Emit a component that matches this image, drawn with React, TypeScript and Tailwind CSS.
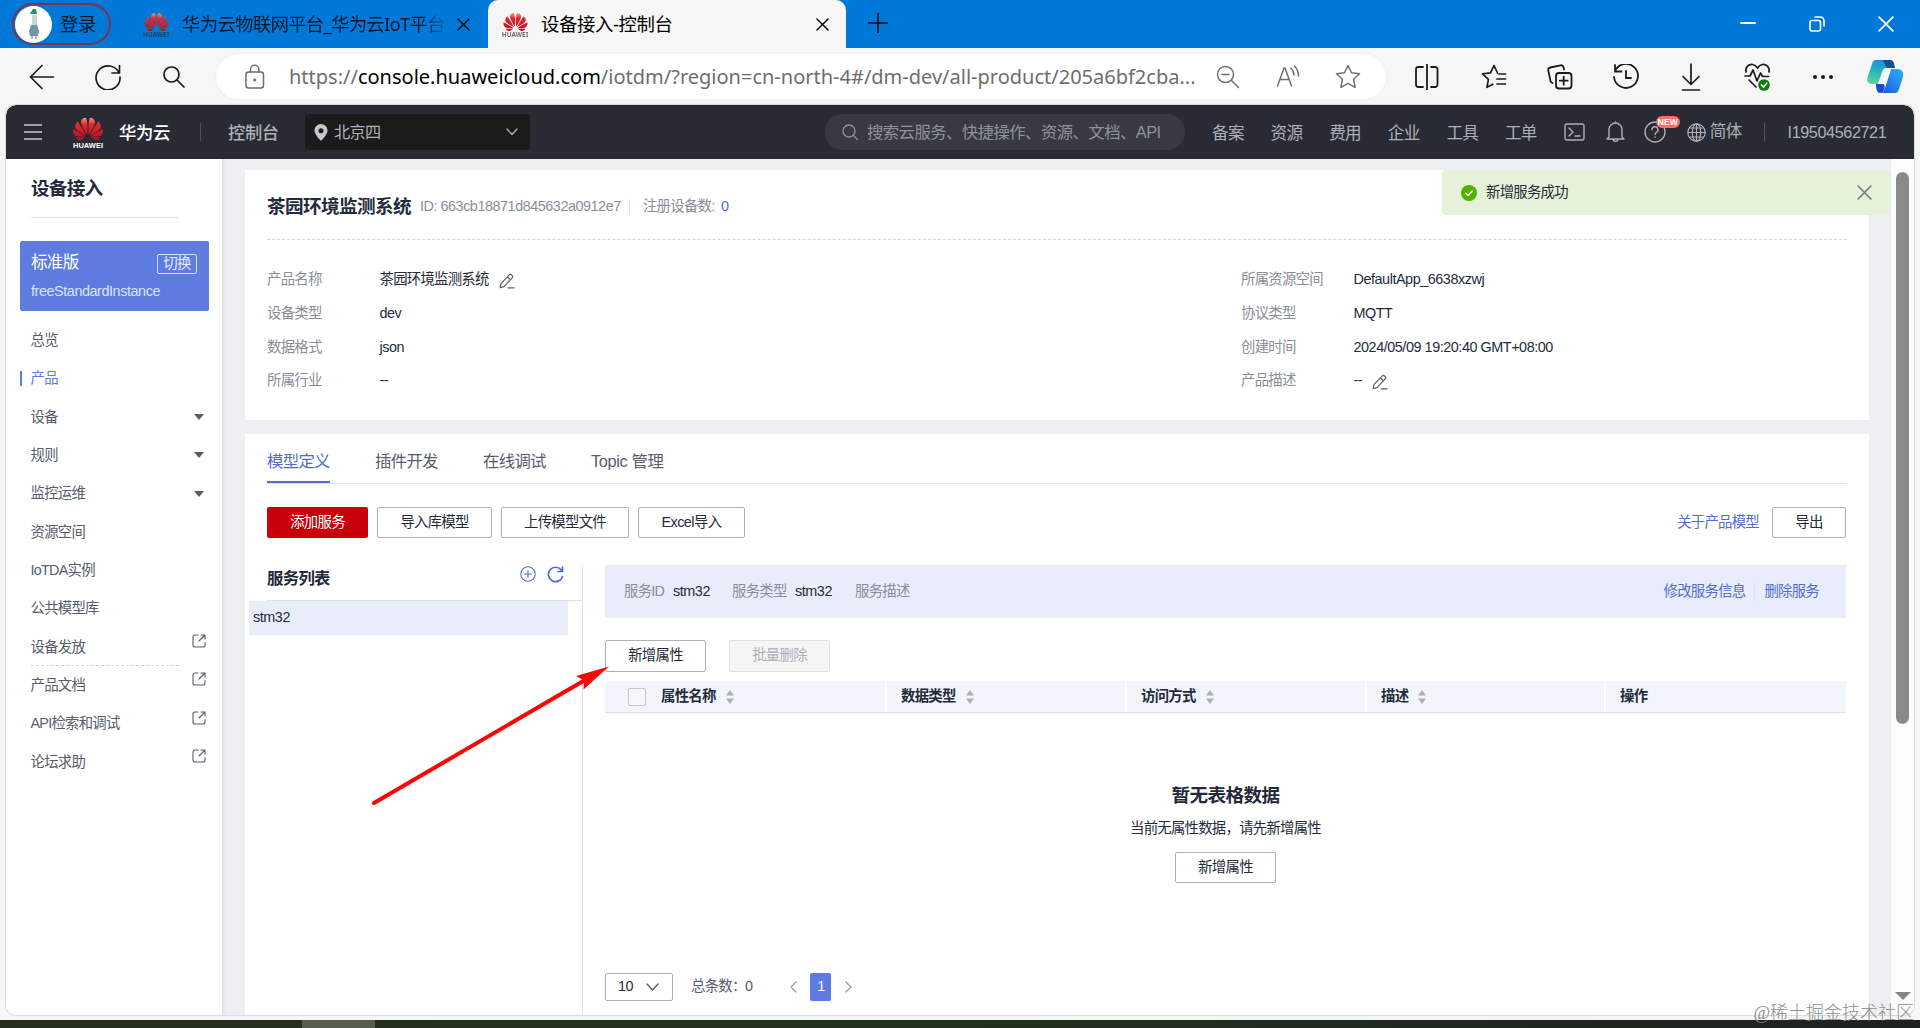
import React from "react";
import { SiHuawei } from "react-icons/si";

type IconProps = {
  w: number;
  h?: number;
  vb?: string;
  sw?: number;
  className?: string;
  children: React.ReactNode;
};

function Icon({ w, h = w, vb, sw = 1.5, className = "", children }: IconProps) {
  return (
    <svg
      width={w}
      height={h}
      viewBox={vb ?? `0 0 ${w} ${h}`}
      fill="none"
      stroke="currentColor"
      strokeWidth={sw}
      strokeLinecap="round"
      strokeLinejoin="round"
      className={`shrink-0 ${className}`}
    >
      {children}
    </svg>
  );
}

const Cross = ({ s, sw = 1.5, className = "" }: { s: number; sw?: number; className?: string }) => (
  <Icon w={s} vb="0 0 14 14" sw={sw} className={className}>
    <path d="M1 1l12 12M13 1L1 13" />
  </Icon>
);

const Edit = ({ className = "" }: { className?: string }) => (
  <Icon w={16} sw={1.2} className={`text-[#575d6c] ${className}`}>
    <path d="M1.2 14.6l.7-4L10.3 1.9a1.5 1.5 0 0 1 2.1 0l.8.8a1.5 1.5 0 0 1 0 2.1L5 13.6zM8.6 4l2.7 2.7M9 14.8h6" />
  </Icon>
);

const External = () => (
  <Icon w={14} sw={1.1} className="text-[#575d6c]">
    <path d="M6 1H3a2 2 0 0 0-2 2v8a2 2 0 0 0 2 2h8a2 2 0 0 0 2-2V8.500M9 1h4v4M13 1L7 7" />
  </Icon>
);

const Sort = () => (
  <svg width="8" height="14" viewBox="0 0 8 14" className="ml-[10px] shrink-0 fill-[#adb0b8]">
    <path d="M4 0l4 5.500H0zM4 14L0 8.500h8z" />
  </svg>
);

/* Latin text is set a little looser than the Chinese text round it. */
const isLatin = (s: string) => /^[\x00-\x7f]*$/.test(s);
const tracking = (s: string) => (isLatin(s) ? "tracking-[-0.45px]" : "");

function Logo({ caption, small }: { caption: string; small?: boolean }) {
  return (
    <span className={small ? "flex w-[26px] shrink-0 flex-col items-center tracking-normal" : "flex w-[32px] shrink-0 flex-col items-center tracking-normal"}>
      <SiHuawei className={small ? "h-[24px] w-[25px] fill-[url(#petal)]" : "h-[30px] w-[30px] fill-[url(#petal)]"} />
      <span
        className={
          small
            ? "-mt-[3px] text-[6.5px] leading-[7px] font-bold text-[#333] opacity-70"
            : "-mt-[3px] text-[7.500px] leading-[9px] font-bold text-white"
        }
      >
        {caption}
      </span>
    </span>
  );
}

function TabBar() {
  return (
    <div className="flex h-[48px] items-stretch bg-[#0078d8] font-['Noto_Sans','Noto_Sans_CJK_SC',sans-serif] text-[18.400px] tracking-[-0.4px] text-[#0b1626]">
      <div className="mt-[3px] ml-[12px] flex h-[42px] w-[99px] items-center rounded-full border-2 border-[#7d3350] pl-px">
        <span className="flex h-[37px] w-[37px] items-center justify-center rounded-full bg-white">
          <svg width="12" height="32" viewBox="0 0 12 32">
            <path d="M3 4l2-3h3l1 5H2z" fill="#2f8a6c" />
            <path d="M4 7h5v11H4z" fill="#c4d8d5" />
            <path d="M3 17h6l2 6-1 5H2l-1-5z" fill="#6e97a8" />
            <path d="M3 28h2v3H3zM7 28h2v3H7z" fill="#b8b4c4" />
          </svg>
        </span>
        <span className="ml-[8px]">登录</span>
      </div>
      <div className="ml-[32px] flex w-[345px] items-center">
        <Logo caption="HUAWEI" small />
        <span className="ml-[13px] w-[264px] whitespace-nowrap [mask-image:linear-gradient(to_right,black_90%,#0002)] tracking-[-0.7px]">
          华为云物联网平台_华为云IoT平台
        </span>
        <Cross s={13} className="ml-[11px] text-black" />
      </div>
      <div className="flex w-[358px] items-center rounded-t-[10px] bg-[#f6f6f6]">
        <span className="ml-[14px]"><Logo caption="HUAWEI" small /></span>
        <span className="ml-[13px] w-[275px] text-black">设备接入-控制台</span>
        <Cross s={13} className="text-black" />
      </div>
      <Icon w={20} sw={1.4} className="mt-[13px] ml-[22px] text-black">
        <path d="M10 0v20M0 10h20" />
      </Icon>
      <div className="ml-auto flex items-center gap-[53px] pr-[26px] text-white">
        <Icon w={16} sw={1.8}><path d="M1 7h14" /></Icon>
        <Icon w={16} sw={1.6}>
          <rect x="1" y="4.500" width="10.500" height="10.500" rx="2" />
          <path d="M6 1h5a4 4 0 0 1 4 4v5" />
        </Icon>
        <Cross s={16} sw={1.5} />
      </div>
    </div>
  );
}

function AddressBar() {
  return (
    <div className="flex h-[57px] items-center bg-[#f6f6f6] text-[#1b1b1b]">
      <Icon w={26} sw={1.7} className="ml-[29px]"><path d="M24.500 13H1.500M13 1.500L1.500 13 13 24.500" /></Icon>
      <Icon w={26} sw={1.7} className="ml-[40px]">
        <path d="M24 9A12 12 0 1 0 25 13M24.500 1.500V9H17" />
      </Icon>
      <Icon w={24} sw={1.7} className="ml-[41px]"><circle cx="9.500" cy="9.500" r="7.500" /><path d="M15 15l7 7" /></Icon>
      <div className="ml-[30px] flex h-[45px] w-[1170px] items-center rounded-full bg-white text-[#6e6e6e] shadow-[0_0_3px_#0000000f]">
        <Icon w={20} h={26} sw={1.5} className="ml-[29px]">
          <rect x="1" y="8" width="17.500" height="16" rx="2.500" />
          <path d="M5.500 8V5.500a4.200 4.200 0 0 1 8.400 0V8" />
          <circle cx="9.700" cy="16" r=".8" fill="currentColor" />
        </Icon>
        <span className="ml-[24px] w-[909px] whitespace-nowrap font-['Noto_Sans'] text-[20px] tracking-normal">
          https://<span className="text-black">console.huaweicloud.com</span>/iotdm/?region=cn-north-4#/dm-dev/all-product/205a6bf2cba...
        </span>
        <Icon w={24} sw={1.5} className="ml-[18px]">
          <circle cx="9.500" cy="9.500" r="8" /><path d="M15.500 15.500l7 7M6 9.500h7" />
        </Icon>
        <Icon w={26} sw={1.5} className="ml-[36px]">
          <path d="M1.500 22L8 4h1l6.500 18M4 15.500h9M15 4a10 10 0 0 1 3 7M18.500 2a14 14 0 0 1 4 10" />
        </Icon>
        <Icon w={26} sw={1.5} className="ml-[33px]">
          <path d="M13 1.500l3.500 7.300 8 1-5.900 5.500 1.500 8-7.100-3.900-7.100 3.900 1.500-8L1.500 9.800l8-1z" />
        </Icon>
      </div>
      <Icon w={26} sw={1.8} className="ml-[28px]">
        <path d="M9 3H4.500a2.500 2.500 0 0 0-2.500 2.500v15A2.500 2.500 0 0 0 4.500 23H9M17 3h4a2.500 2.500 0 0 1 2.500 2.500v15A2.500 2.500 0 0 1 21 23h-4M13 0v26" />
      </Icon>
      <Icon w={26} sw={1.7} className="ml-[41px]">
        <path d="M16.500 9L13 1.500 9.500 8.800l-8 1 5.900 5.500-1.500 8 6-3M18 10h6.500M16 15h8.500M16 20h8.500" />
      </Icon>
      <Icon w={26} sw={1.8} className="ml-[40px]">
        <rect x="9" y="9" width="15.500" height="15.500" rx="3" />
        <path d="M16.700 12.700v8M12.700 16.700h8M5.500 19c-1.200-.300-1.700-1-2-2L1.300 6.500c-.300-1.600.500-2.700 2-3L13.500 1.300c1.500-.300 2.700.700 3 2L17 5.500" />
      </Icon>
      <Icon w={26} sw={1.8} className="ml-[40px]">
        <path d="M2 7A12 12 0 1 1 1 13M2 1v6.500h6.500M13 7v7h5" />
      </Icon>
      <Icon w={24} h={28} sw={1.7} className="ml-[41px]">
        <path d="M11 1v20M3 13.500l8 8 8-8M2.500 27h17" />
      </Icon>
      <Icon w={28} sw={1.7} className="ml-[40px]">
        <path d="M2 9C1 4 5 1 8.500 1.500c2.500.400 4 2 5 3.500 1-1.500 2.500-3.100 5-3.500C22 1 26 4 25 9M1 13h5l3-6 4 11 3.500-8 2 3.500h6M5 17l7 7" />
        <circle cx="20" cy="22" r="5" fill="#107c10" stroke="#107c10" />
        <path d="M17.500 22l2 2 3.200-3.800" stroke="white" />
      </Icon>
      <Icon w={22} h={6} className="ml-[40px]">
        <g fill="currentColor" stroke="none"><circle cx="3" cy="3" r="2" /><circle cx="11" cy="3" r="2" /><circle cx="19" cy="3" r="2" /></g>
      </Icon>
      <svg width="37" height="33" viewBox="0 0 37 33" className="ml-[33px] shrink-0">
        <defs>
          <linearGradient id="cpA" x1="0.500" y1="0" x2="0.300" y2="1">
            <stop offset="0" stopColor="#168fd8" /><stop offset=".5" stopColor="#2ab5bd" /><stop offset="1" stopColor="#5fd692" />
          </linearGradient>
          <linearGradient id="cpB" x1="1" y1="0" x2="0" y2="1">
            <stop offset="0" stopColor="#2fb4fa" /><stop offset="1" stopColor="#1a55e0" />
          </linearGradient>
        </defs>
        <path d="M9 0h13c3 0 4 2 5 8h-8c-2 0-3 1-4 4l-4 12H5c-4 0-6-3-4-8L5 4c1-3 2-4 4-4z" fill="url(#cpA)" />
        <path d="M16 0h7c3 0 4 2 5 8h-7c-2 0-3-4-5-8z" fill="#14508c" />
        <path d="M28 33H13c3 0 4-2 5-5l6-19h6c5 0 7 3 6 8l-4 12c-1 3-2 4-4 4z" fill="url(#cpB)" />
        <path d="M9 24h7c2 0 2 4 1 6-1 2-2 3-4 3-3 0-4-4-4-9z" fill="#1f49c9" />
        <path d="M20 9h4l-5 15h-8c2 0 3-1 4-4l2-7c1-3 1-4 3-4z" fill="#f4fbff" />
      </svg>
    </div>
  );
}

function ConsoleHeader() {
  const links = ["备案", "资源", "费用", "企业", "工具", "工单"];
  return (
    <header className="flex h-[54px] shrink-0 items-center rounded-t-[10px] bg-[#282b33] text-[16.600px] leading-[20px] tracking-[-0.7px] whitespace-nowrap text-[#adb0b8]">
      <Icon w={18} sw={1.7} className="ml-[18px] text-[#c5c7cc]"><path d="M0 2h18M0 9h18M0 16h18" /></Icon>
      <span className="ml-[30px]"><Logo caption="HUAWEI" /></span>
      <span className="ml-[15px] w-[51px] pt-px text-[17.400px] tracking-[-0.4px] font-medium text-white">华为云</span>
      <span className="ml-[30px] h-[18px] w-px bg-[#50535b]" />
      <span className="ml-[27px] w-[51px] pt-px text-[17.300px] tracking-[-0.400px] font-medium">控制台</span>
      <div className="ml-[26px] flex h-[36px] w-[225px] items-center rounded-[3px] bg-[#1b1b1c]">
        <svg width="14" height="17" viewBox="0 0 14 17" className="ml-[9px] fill-[#c5c7cc]">
          <path fillRule="evenodd" d="M7 0a6.600 6.600 0 0 1 6.600 6.600C13.600 10.500 7 17 7 17S.4 10.500.4 6.600A6.600 6.600 0 0 1 7 0zm0 4.200a2.500 2.500 0 1 0 0 5 2.500 2.500 0 0 0 0-5z" />
        </svg>
        <span className="ml-[6px] text-[16.200px]">北京四</span>
        <Icon w={12} h={8} sw={1.3} className="mr-[12px] ml-auto"><path d="M1 1l5 5.500L11 1" /></Icon>
      </div>
      <div className="ml-[295px] flex h-[36px] w-[360px] items-center rounded-full bg-[#393a41] text-[16.400px] tracking-[-0.58px] text-[#8f929a]">
        <Icon w={17} sw={1.3} className="ml-[17px]"><circle cx="7" cy="7" r="6" /><path d="M11.500 11.500l4 4" /></Icon>
        <span className="ml-[8px]">搜索云服务、快捷操作、资源、文档、API</span>
      </div>
      <nav className="mt-[3px] ml-[27px] flex gap-[26.800px]">
        {links.map((l) => <span key={l} className="w-[31.800px]">{l}</span>)}
      </nav>
      <Icon w={21} h={18} sw={1.4} className="ml-[27px]">
        <rect x="1" y="1" width="19" height="16" rx="2" /><path d="M5 5l4 4-4 4M11 13h5" />
      </Icon>
      <Icon w={19} h={22} sw={1.4} className="ml-[21px]">
        <path d="M3 16V8.500a6.500 6.500 0 0 1 13 0V16l2 2H1zM7 18.500a2.600 2.600 0 0 0 5 0M9.500 2V1" />
      </Icon>
      <span className="relative ml-[19px]">
        <Icon w={22} sw={1.4}>
          <circle cx="11" cy="11" r="10" />
          <path d="M8 8.800a3 3 0 1 1 4.500 2.500c-1 .600-1.500 1.200-1.500 2.200M11 16v.300" />
        </Icon>
        <span className="absolute -top-[5px] left-[12px] flex h-[12px] w-[24px] items-center justify-center rounded-full bg-[#f66f6a] text-[8.500px] leading-[12px] font-bold tracking-normal text-white">
          NEW
        </span>
      </span>
      <Icon w={19} sw={1.2} className="ml-[21px]">
        <circle cx="9.500" cy="9.500" r="8.700" />
        <ellipse cx="9.500" cy="9.500" rx="4.200" ry="8.700" />
        <path d="M9.500 1v17M1 9.500h17M2.500 5h14M2.500 14h14" />
      </Icon>
      <span className="ml-[4px]">简体</span>
      <span className="ml-[22px] h-[18px] w-px bg-[#50535b]" />
      <span className="ml-[23px] text-[16.200px] tracking-[-0.400px]">I19504562721</span>
    </header>
  );
}

const menu: { label: string; kind?: "active" | "group" | "link"; dashed?: boolean }[] = [
  { label: "总览" },
  { label: "产品", kind: "active" },
  { label: "设备", kind: "group" },
  { label: "规则", kind: "group" },
  { label: "监控运维", kind: "group" },
  { label: "资源空间" },
  { label: "IoTDA实例" },
  { label: "公共模型库" },
  { label: "设备发放", kind: "link", dashed: true },
  { label: "产品文档", kind: "link" },
  { label: "API检索和调试", kind: "link" },
  { label: "论坛求助", kind: "link" },
];

function Sidebar() {
  return (
    <aside className="flex w-[216px] shrink-0 flex-col bg-white text-[#575d6c] shadow-[1px_0_3px_#0000001a]">
      <h1 className="mt-[15px] ml-[25px] h-[44px] w-[148px] border-b border-[#dfe1e6] text-[18.600px] leading-[29px] font-bold text-[#252b3a]">
        设备接入
      </h1>
      <div className="mt-[23px] ml-[14px] h-[70px] w-[189px] rounded-[2px] bg-[#5e7ce0] px-[11px] text-white">
        <div className="flex h-[45px] items-center justify-between">
          <span className="text-[16.600px]">标准版</span>
          <span className="mr-px flex h-[20px] w-[40px] items-center justify-center rounded-[2px] border border-[#d5ddf8] text-[14.500px] text-[#e4eafc]">切换</span>
        </div>
        <div className="-mt-[5px] text-[14.400px] leading-[20px] tracking-[-0.430px] text-[#dbe3fb]">freeStandardInstance</div>
      </div>
      <ul className="mt-[10px]">
        {menu.map((m) => (
          <li
            key={m.label}
            className={`flex h-[38.350px] items-center ${m.kind === "link" ? "pr-[16.500px]" : "pr-[18px]"} ${m.kind === "active" ? "pl-[14px] text-[#5e7ce0]" : "pl-[24.500px]"}`}
          >
            {m.kind === "active" && <span className="mr-[8.500px] h-[15px] w-[2px] bg-[#5e7ce0]" />}
            <span className="relative pt-px">
              {m.label}
              {m.dashed && <i className="absolute top-[29px] left-0 w-[148px] border-t border-dashed border-[#d0d2d8]" />}
            </span>
            {m.kind === "group" && (
              <i className="ml-auto border-x-[5px] border-t-[6px] border-x-transparent border-t-[#575d6c]" />
            )}
            {m.kind === "link" && <span className="mb-[12px] ml-auto"><External /></span>}
          </li>
        ))}
      </ul>
    </aside>
  );
}

function Field({ label, value, edit }: { label: string; value: string; edit?: boolean }) {
  return (
    <div className="flex h-[33.800px] items-center">
      <span className="w-[112.500px] text-[#8a8e99]">{label}</span>
      <span className={`text-[#252b3a] ${tracking(value)}`}>{value}</span>
      {edit && <Edit className="mt-[2px] ml-[10px]" />}
    </div>
  );
}

function ProductCard() {
  return (
    <section className="h-[250px] shrink-0 bg-white px-[22px]">
      <div className="flex h-[70px] items-center border-b border-dashed border-[#d4d6db] pt-[4px]">
        <h2 className="text-[18.600px] tracking-[-0.6px] font-bold text-[#252b3a]">茶园环境监测系统</h2>
        <span className="ml-[9px] w-[201px] tracking-[-0.460px] whitespace-nowrap text-[#8a8e99]">ID: 663cb18871d845632a0912e7</span>
        <span className="ml-[8px] h-[15px] w-px bg-[#dfe1e6]" />
        <span className="ml-[13px] text-[#8a8e99]">注册设备数:&nbsp; <b className="font-normal text-[#526ecc]">0</b></span>
      </div>
      <div className="flex pt-[23px]">
        <div className="w-[974px]">
          <Field label="产品名称" value="茶园环境监测系统" edit />
          <Field label="设备类型" value="dev" />
          <Field label="数据格式" value="json" />
          <Field label="所属行业" value="--" />
        </div>
        <div>
          <Field label="所属资源空间" value="DefaultApp_6638xzwj" />
          <Field label="协议类型" value="MQTT" />
          <Field label="创建时间" value="2024/05/09 19:20:40 GMT+08:00" />
          <Field label="产品描述" value="--" edit />
        </div>
      </div>
    </section>
  );
}

const btn = "flex shrink-0 items-center justify-center rounded-[2px] border border-[#adb0b8] text-[#252b3a]";

function ServiceList() {
  return (
    <div className="flex w-[338px] shrink-0 flex-col border-r border-[#dfe1e6] pl-[4px]">
      <div className="ml-[18px] flex h-[36px] items-center border-b border-[#dfe1e6] pb-[17px] text-[#526ecc]">
        <h3 className="mt-[7px] text-[16.400px] leading-[20px] tracking-[-0.7px] font-bold text-[#252b3a]">服务列表</h3>
        <Icon w={16} sw={1.100} className="mr-[11px] ml-auto"><circle cx="8" cy="8" r="7.200" /><path d="M8 4.500v7M4.500 8h7" /></Icon>
        <Icon w={17} sw={1.700} className="mr-[18px]"><path d="M14.500 4.300A7.200 7.200 0 1 0 15.500 10.500M15.500 1v4.500H11" /></Icon>
      </div>
      <div className="flex h-[34px] w-[319px] items-center bg-[#e9edfa] pl-[4px] tracking-[-0.450px] text-[#252b3a]">stm32</div>
    </div>
  );
}

function ServiceDetail() {
  const cols = [
    { t: "数据类型", s: true, c: "w-[240px]" },
    { t: "访问方式", s: true, c: "w-[240px]" },
    { t: "描述", s: true, c: "w-[239px]" },
    { t: "操作", s: false, c: "flex-1" },
  ];
  return (
    <div className="ml-[22px] flex w-[1241px] flex-col">
      <div className="flex h-[53px] items-center bg-[#e9edfa] px-[19px] text-[#8a8e99]">
        <span className="w-[49px]">服务ID</span>
        <span className="w-[59px] tracking-[-0.450px] text-[#252b3a]">stm32</span>
        <span className="w-[63px]">服务类型</span>
        <span className="w-[60px] tracking-[-0.450px] text-[#252b3a]">stm32</span>
        <span>服务描述</span>
        <span className="mr-[9px] ml-auto text-[#526ecc]">修改服务信息</span>
        <span className="h-[20px] w-px bg-[#dfe1e6]" />
        <span className="mr-[8px] ml-[9px] text-[#526ecc]">删除服务</span>
      </div>
      <div className="mt-[22px] flex h-[32px] gap-[23px]">
        <span className={`${btn} w-[101px]`}>新增属性</span>
        <span className="flex w-[101px] items-center justify-center rounded-[2px] border border-[#dfe1e6] bg-[#f5f5f6] text-[#adb0b8]">批量删除</span>
      </div>
      <div className="mt-[9px] flex h-[32px] border-b border-[#dfe1e6] bg-[#f2f5fc] font-bold text-[#252b3a]">
        <div className="flex w-[282px] items-center border-r-2 border-white pt-px pl-[23px]">
          <span className="mr-[15px] h-[18px] w-[18px] rounded-[2px] border border-[#c3c6cd] bg-[#f5f7fd]" />
          属性名称<Sort />
        </div>
        {cols.map((c) => (
          <div key={c.t} className={`${c.c} flex items-center pt-px pl-[14px] ${c.s ? "border-r-2 border-white" : ""}`}>
            {c.t}{c.s && <Sort />}
          </div>
        ))}
      </div>
      <div className="flex h-[260px] flex-col items-center pt-[70px]">
        <h3 className="text-[18.600px] leading-[26px] tracking-[-0.6px] font-bold text-[#252b3a]">暂无表格数据</h3>
        <p className="mt-[9px] leading-[20px] text-[#252b3a]">当前无属性数据，请先新增属性</p>
        <span className={`${btn} mt-[14px] h-[31px] w-[101px]`}>新增属性</span>
      </div>
      <div className="flex h-[28px] items-center text-[#575d6c]">
        <span className="flex h-[28px] w-[68px] items-center rounded-[2px] border border-[#adb0b8] pl-[12px] tracking-[-0.450px] text-[#252b3a]">
          10
          <Icon w={13} h={9} sw={1.400} className="ml-[13px] text-[#575d6c]"><path d="M1 1l5.500 6L12 1" /></Icon>
        </span>
        <span className="ml-[18px] w-[54px] whitespace-nowrap">总条数：</span>0
        <Icon w={7} h={12} sw={1.300} className="ml-[38px] text-[#9a9da6]"><path d="M6 1L1 6l5 5" /></Icon>
        <span className="ml-[13px] flex h-[28px] w-[21px] items-center justify-center rounded-[2px] bg-[#5e7ce0] text-white">1</span>
        <Icon w={7} h={12} sw={1.300} className="ml-[14px] text-[#9a9da6]"><path d="M1 1l5 5-5 5" /></Icon>
      </div>
    </div>
  );
}

function ModelCard() {
  return (
    <section className="mt-[14px] flex flex-1 flex-col bg-white">
      <div className="mr-[23px] ml-[22px] flex h-[50px] border-b border-[#dfe1e6] text-[16.400px] leading-[55px] tracking-[-0.7px] text-[#575d6c]">
        <span className="h-[49px] w-[63px] border-b-2 border-[#526ecc] text-[#526ecc]">模型定义</span>
        <span className="ml-[45px] w-[63px]">插件开发</span>
        <span className="ml-[45px] w-[63px]">在线调试</span>
        <span className="ml-[45px] tracking-[-0.4px]">Topic 管理</span>
      </div>
      <div className="mr-[23px] ml-[22px] mt-[23px] flex h-[31px] gap-[9px]">
        <span className="flex w-[101px] items-center justify-center rounded-[2px] bg-[#c7000b] text-white">添加服务</span>
        <span className={`${btn} w-[115px]`}>导入库模型</span>
        <span className={`${btn} w-[128px]`}>上传模型文件</span>
        <span className={`${btn} w-[107px] tracking-[-0.550px]`}>Excel导入</span>
        <span className="mr-[4px] ml-auto self-center text-[#526ecc]">关于产品模型</span>
        <span className={`${btn} w-[74px]`}>导出</span>
      </div>
      <div className="mt-[27px] flex flex-1">
        <ServiceList />
        <ServiceDetail />
      </div>
    </section>
  );
}

function Toast() {
  return (
    <div className="absolute top-[170px] left-[1442px] flex h-[45px] w-[449px] items-center rounded-[4px] bg-[#e6f1d9] text-[#252b3a]">
      <Icon w={16} sw={1.400} className="ml-[19px]">
        <circle cx="8" cy="8" r="8" fill="#50b300" stroke="none" />
        <path d="M4.800 8.200l2.300 2.200 4.200-4.300" stroke="white" />
      </Icon>
      <span className="ml-[9px]">新增服务成功</span>
      <Cross s={15} sw={1.400} className="mr-[19px] ml-auto text-[#6d7480]" />
    </div>
  );
}

export default function App() {
  return (
    <div className="relative flex h-[1028px] w-[1920px] flex-col overflow-hidden bg-[#f6f6f6] font-['Liberation_Sans','Noto_Sans_CJK_SC',sans-serif] text-[14.400px] tracking-[-0.750px]">
      <svg width="0" height="0" className="absolute">
        <defs>
          <linearGradient id="petal" x1="0" y1="0" x2="0" y2="1">
            <stop offset="0" stopColor="#f4977c" /><stop offset=".3" stopColor="#e0282e" /><stop offset="1" stopColor="#c40d1e" />
          </linearGradient>
        </defs>
      </svg>
      <TabBar />
      <AddressBar />
      <div className="mr-[6px] ml-[6px] flex h-[910px] shrink-0 flex-col overflow-hidden rounded-[10px] shadow-[0_0_1px_1px_#d9dbde]">
        <ConsoleHeader />
        <div className="flex flex-1 bg-[#eeeff3]">
          <Sidebar />
          <main className="ml-[23px] flex w-[1624px] flex-col pt-[11px]">
            <ProductCard />
            <ModelCard />
          </main>
          <div className="ml-auto flex w-[23px] flex-col items-center bg-[#fcfcfc] pt-[13px]">
            <span className="h-[552px] w-[13px] rounded-full bg-[#8a8a8a]" />
            <i className="mt-[268px] border-x-[8px] border-t-[8px] border-x-transparent border-t-[#858585]" />
          </div>
        </div>
      </div>
      <div className="mt-[5px] flex h-[8px] shrink-0 bg-gradient-to-r from-[#26301f] via-[#22301f] to-[#1c221e] pl-[302px]">
        <span className="w-[73px] bg-[#565e4e]" />
      </div>
      <Toast />
      <svg width="240" height="144" viewBox="0 0 240 144" className="absolute top-[663px] left-[371px]">
        <path d="M3 140L214 17" stroke="#fb0505" strokeWidth="4" strokeLinecap="round" />
        <path d="M238 3.500L205 13l8 4.500-.500 9z" fill="#fb0505" />
      </svg>
      <span className="absolute right-[6px] bottom-[3px] font-['Liberation_Serif','Noto_Sans_CJK_SC',serif] text-[18px] leading-[24px] font-light tracking-normal text-[#8c8e8c]">
        @稀土掘金技术社区
      </span>
    </div>
  );
}
